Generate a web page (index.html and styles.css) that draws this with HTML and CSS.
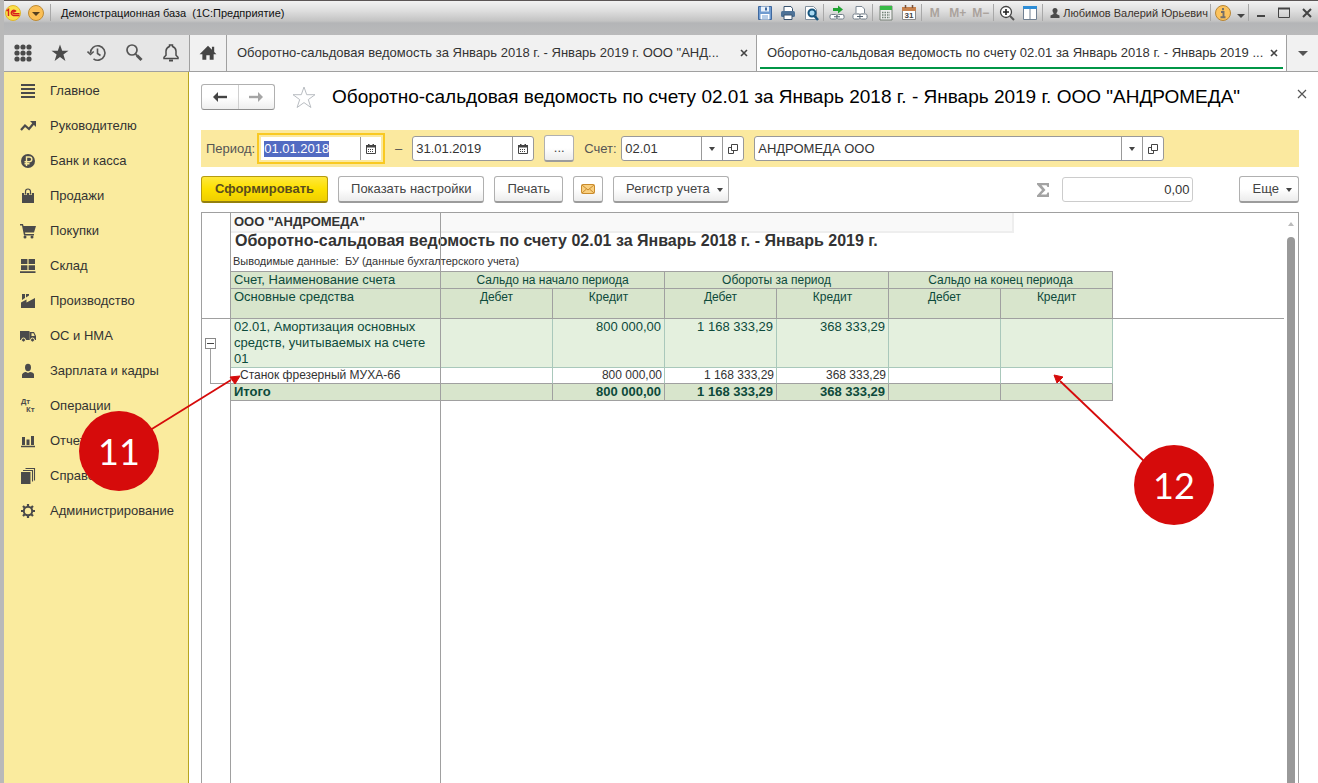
FILE: index.html
```html
<!DOCTYPE html>
<html lang="ru">
<head>
<meta charset="utf-8">
<title>Демонстрационная база (1С:Предприятие)</title>
<link rel="stylesheet" href="styles.css">
</head>
<body>
<div class="window">
  <header class="titlebar">
    <svg class="logo" viewBox="0 0 16 16" aria-label="1С"><circle cx="8" cy="8" r="7.5" fill="#fbe04a" stroke="#e0b52c"/><path d="M1.500 6 3.500 4.500V11M11 6.500A2.600 2.600 0 1 0 8.500 10.500H14.500M9.800 7.300a1 1 0 1 0-1.200 1.300H14.500" fill="none" stroke="#d8201c" stroke-width="1.400"/></svg>
    <button class="tb-menu" aria-label="Главное меню"><svg viewBox="0 0 16 16"><circle cx="8" cy="8" r="7.500" fill="#fbbf55" stroke="#bd8b35"/><path d="M4 7h8l-4 4z" fill="#55401f"/></svg></button>
    <span class="sep"></span>
    <span class="tb-title">Демонстрационная база&nbsp; (1С:Предприятие)</span>
    <div class="tb-tools">
      <button aria-label="Сохранить"><svg viewBox="0 0 16 16"><path d="M1.500 1.500h13v13h-13z" fill="#6f9bd0" stroke="#3f689e"/><path d="M4 1.500h8v5H4z" fill="#e9f1fa"/><path d="M8 2.500h2v3H8z" fill="#3f689e"/><path d="M3.500 9h9v5.500h-9z" fill="#fff"/><path d="M5 11h6M5 13h6" stroke="#6f9bd0"/></svg></button>
      <button aria-label="Печать"><svg viewBox="0 0 16 16"><path d="M4 1.500h7l1.500 2V7H4z" fill="#fff" stroke="#38536f"/><rect x="1" y="6" width="14" height="6" rx="1.500" fill="#4d7297"/><path d="M4 10h8v4.500H4z" fill="#fff" stroke="#38536f"/></svg></button>
      <button aria-label="Просмотр"><svg viewBox="0 0 16 16"><path d="M2.500 1.500h8l3 3v10h-11z" fill="#fff" stroke="#82909e"/><circle cx="9" cy="8" r="3.500" fill="#a9daf3" stroke="#15547c" stroke-width="2"/><path d="m11.500 11 3.500 4" stroke="#15547c" stroke-width="2.500"/></svg></button>
      <span class="sep"></span>
      <button aria-label="Получить ссылку"><svg viewBox="0 0 16 16"><path d="M4 3h5V0.500l5 4-5 4V6H4z" fill="#20a332"/><rect x="1" y="9.500" width="7" height="4.500" rx="1.500" fill="#fff" stroke="#727e89"/><rect x="8" y="9.500" width="7" height="4.500" rx="1.500" fill="#fff" stroke="#727e89"/><path d="M5 11.750h6" stroke="#526271"/></svg></button>
      <button aria-label="Перейти по ссылке"><svg viewBox="0 0 16 16"><path d="M4 8V1.500h6L12.500 4v4" fill="#fff" stroke="#7b8794"/><rect x="1" y="9" width="7" height="5" rx="1.500" fill="#fff" stroke="#727e89"/><rect x="8" y="9" width="7" height="5" rx="1.500" fill="#fff" stroke="#727e89"/><path d="M5 11.500h6" stroke="#526271"/></svg></button>
      <span class="sep"></span>
      <button aria-label="Калькулятор"><svg viewBox="0 0 16 16"><path d="M2 1h12v14H2z" fill="#eee" stroke="#778077"/><path d="M2 1h12v4H2z" fill="#38ba46"/><path d="M4 7.500h8M4 10h8M4 12.500h8" stroke="#718276" stroke-width="1.500" stroke-dasharray="1.500 1"/></svg></button>
      <button aria-label="Календарь"><svg viewBox="0 0 16 16"><path d="M1.500 2.500h13v12h-13z" fill="#fff" stroke="#8b8b8b"/><path d="M1 2h14v4H1z" fill="#c8814b"/><path d="M4.500 0v3M11.500 0v3" stroke="#76513b" stroke-width="1.500"/><text x="8" y="13" text-anchor="middle" class="cal-num">31</text></svg></button>
      <span class="sep"></span>
      <button class="mem">M</button><button class="mem">M+</button><button class="mem">M−</button>
      <span class="sep"></span>
      <button aria-label="Масштаб"><svg viewBox="0 0 16 16"><circle cx="7" cy="7" r="5.500" fill="#fff" stroke="#444" stroke-width="1.300"/><path d="M4 7h6M7 4v6" stroke="#222" stroke-width="1.600"/><path d="m11 11 4 4" stroke="#555" stroke-width="2"/></svg></button>
      <button aria-label="Окна"><svg viewBox="0 0 16 16"><path d="M1.500 2.500h13v12h-13z" fill="#fff" stroke="#708092"/><path d="M1 1h14v3H1z" fill="#2d8dd6"/><path d="M8 4v10" stroke="#708092"/></svg></button>
      <span class="sep"></span>
      <button class="user"><svg viewBox="0 0 10 12"><circle cx="5" cy="3.500" r="2.500" fill="#4a4a4a"/><path d="M3.500 5h3v2l3 1.500V11h-9V8.500l3-1.500z" fill="#4a4a4a"/></svg>Любимов Валерий Юрьевич</button>
      <span class="sep"></span>
      <button aria-label="Информация"><svg viewBox="0 0 16 16"><circle cx="8" cy="8" r="7.500" fill="#fcc35d" stroke="#b78636"/><path d="M8 3v2.300M6 7h2.500v5M5.500 12.200h5" stroke="#74706a" stroke-width="1.900" fill="none"/></svg></button>
      <button class="narrow" aria-label="Ещё"><svg viewBox="0 0 10 16"><path d="M1 9h8l-4 4z" fill="#444"/></svg></button>
      <span class="sep"></span>
      <button aria-label="Свернуть"><svg viewBox="0 0 16 16"><path d="M4 11h8" stroke="#444" stroke-width="2"/></svg></button>
      <button aria-label="Развернуть"><svg viewBox="0 0 16 16"><path d="M2.500 3.500h11v9h-11z" fill="none" stroke="#444"/><path d="M2 3.500h12" stroke="#444" stroke-width="2"/></svg></button>
      <button aria-label="Закрыть"><svg viewBox="0 0 16 16"><path d="m4 4 8 8M12 4l-8 8" stroke="#444" stroke-width="2"/></svg></button>
    </div>
  </header>

  <div class="tabs-row">
    <div class="quick">
      <button aria-label="Меню функций"><svg viewBox="0 0 20 20" fill="#4a4a4a"><circle cx="4" cy="4" r="2.600"/><circle cx="10" cy="4" r="2.600"/><circle cx="16" cy="4" r="2.600"/><circle cx="4" cy="10" r="2.600"/><circle cx="10" cy="10" r="2.600"/><circle cx="16" cy="10" r="2.600"/><circle cx="4" cy="16" r="2.600"/><circle cx="10" cy="16" r="2.600"/><circle cx="16" cy="16" r="2.600"/></svg></button>
      <button aria-label="Избранное"><svg viewBox="0 0 20 20"><path d="m10 1.500 2.200 6.200h6.300l-5.100 3.900 2 6.400-5.400-3.900L4.600 18l2-6.400L1.500 7.700h6.300z" fill="#4a4a4a"/></svg></button>
      <button aria-label="История"><svg viewBox="0 0 20 20" fill="none" stroke="#555"><path d="M3.500 10a7.200 7.200 0 1 1 3 5.800" stroke-width="1.600"/><path d="M0.500 8.500 3.500 11.500l3.200-3M10.500 5.500v5l3 2" stroke-width="1.600"/></svg></button>
      <button aria-label="Поиск"><svg viewBox="0 0 20 20" fill="none" stroke="#555"><circle cx="8" cy="7" r="5" stroke-width="1.700"/><path d="m11.500 11 2 1.800" stroke-width="1.700"/><path d="m13 12.500 4.500 4.500" stroke-width="3"/></svg></button>
      <button aria-label="Оповещения"><svg viewBox="0 0 20 20"><path d="M3 15.500v-1.200l2-2V8a5 5 0 0 1 3.500-4.500V2h3v1.500A5 5 0 0 1 15 8v4.300l2 2v1.200z" fill="none" stroke="#4a4a4a" stroke-width="1.500"/><path d="M8 16.500h4v2H8z" fill="#4a4a4a"/></svg></button>
    </div>
    <button class="home" aria-label="Начальная страница"><svg viewBox="0 0 16 16"><path d="M8 1.500 0.500 9H3v5h3.500V10h3v4H13V9h2.500l-2-2V2.500h-2V5z" fill="#444"/></svg></button>
    <div class="tab"><span class="tab-text">Оборотно-сальдовая ведомость за Январь 2018 г. - Январь 2019 г. ООО "АНД...</span><button class="tab-close" aria-label="Закрыть вкладку"><svg viewBox="0 0 8 8"><path d="m1 1 6 6M7 1 1 7" stroke="#444" stroke-width="1.600"/></svg></button></div>
    <div class="tab active"><span class="tab-text">Оборотно-сальдовая ведомость по счету 02.01 за Январь 2018 г. - Январь 2019 ...</span><button class="tab-close" aria-label="Закрыть вкладку"><svg viewBox="0 0 8 8"><path d="m1 1 6 6M7 1 1 7" stroke="#444" stroke-width="1.600"/></svg></button></div>
    <button class="tab-more" aria-label="Список вкладок"><i class="caret big"></i></button>
  </div>

  <div class="body">
    <nav class="sidebar">
      <a href="#"><svg viewBox="0 0 16 16"><path d="M1 2h14M1 6h14M1 10h14M1 14h14" stroke="#4a4a4a" stroke-width="2"/></svg>Главное</a>
      <a href="#"><svg viewBox="0 0 16 16"><path d="m1 12 4-4.500 4 3.500 4.500-5.500" fill="none" stroke="#4a4a4a" stroke-width="2.200"/><path d="M10 3h6v6z" fill="#4a4a4a"/></svg>Руководителю</a>
      <a href="#"><svg viewBox="0 0 16 16"><circle cx="8" cy="8" r="7" fill="#4a4a4a"/><path d="M6.500 13V4h3a2.300 2.300 0 0 1 0 4.700H4.500M4.500 10.800h5" fill="none" stroke="#faeb9e" stroke-width="1.400"/></svg>Банк и касса</a>
      <a href="#"><svg viewBox="0 0 16 16"><path d="M2 5h12v10H2z" fill="#4a4a4a"/><path d="M5.500 7V3.500a2.500 2.500 0 0 1 5 0V7" fill="none" stroke="#faeb9e" stroke-width="2.600"/><path d="M5.500 6.500V3.500a2.500 2.500 0 0 1 5 0V6.500" fill="none" stroke="#4a4a4a" stroke-width="1.200"/></svg>Продажи</a>
      <a href="#"><svg viewBox="0 0 16 16"><path d="M0 1h3l.5 2H16l-2 6.500H5l.3 1.500H14v1.500H4L2 2.500H0z" fill="#4a4a4a"/><circle cx="5" cy="14" r="1.500" fill="#4a4a4a"/><circle cx="12" cy="14" r="1.500" fill="#4a4a4a"/></svg>Покупки</a>
      <a href="#"><svg viewBox="0 0 16 16"><path d="M1 1h6.400v5H1zM8.600 1H15v5H8.600zM1 7.200h6.400V12H1zM8.600 7.200H15V12H8.600zM0 13.200h15.500V15H0z" fill="#4a4a4a"/></svg>Склад</a>
      <a href="#"><svg viewBox="0 0 16 16"><path d="M1 15V9.500L6.500 6.500v3L15 5v10zM2 1h3v4l-3 2zM6 1h3v1.500L6 4.500z" fill="#4a4a4a"/></svg>Производство</a>
      <a href="#"><svg viewBox="0 0 16 16"><path d="M0 3h9.500v9H0z" fill="#4a4a4a"/><path d="M9.500 4H14l2 4v4H9.500z" fill="#4a4a4a"/><path d="M11.500 5.300h2L14.700 8h-3.200z" fill="#faeb9e"/><circle cx="3.500" cy="12" r="2" fill="#4a4a4a" stroke="#faeb9e"/><circle cx="12.500" cy="12" r="2" fill="#4a4a4a" stroke="#faeb9e"/></svg>ОС и НМА</a>
      <a href="#"><svg viewBox="0 0 16 16"><ellipse cx="8" cy="4.500" rx="3" ry="3.700" fill="#4a4a4a"/><path d="M2 15v-3.500c1-2 3-2.500 4-2.500l2 1 2-1c2 0 4 1 4 2.500V15z" fill="#4a4a4a"/></svg>Зарплата и кадры</a>
      <a href="#"><svg viewBox="0 0 16 16" class="dtkt"><text x="1" y="6">Дт</text><text x="6" y="14">Кт</text></svg>Операции</a>
      <a href="#"><svg viewBox="0 0 16 16"><path d="M1 12.800h14v1.500H1zM2 4h3v8H2zM6.500 6.500h3V12h-3zM11 3h3v9h-3z" fill="#4a4a4a"/></svg>Отчеты</a>
      <a href="#"><svg viewBox="0 0 16 16"><path d="M1 4h9.500v12H1z" fill="#4a4a4a"/><path d="M3 2.500h9.500v11M5.500.500H14.500v12" fill="none" stroke="#4a4a4a" stroke-width="1.100"/></svg>Справочники</a>
      <a href="#"><svg viewBox="0 0 16 16"><circle cx="8" cy="8" r="4.200" fill="none" stroke="#4a4a4a" stroke-width="2"/><path d="M8 1v2.500M8 12.500V15M1 8h2.500M12.500 8H15M3 3l2 2M11 11l2 2M13 3l-2 2M5 11l-2 2" stroke="#4a4a4a" stroke-width="2.200"/></svg>Администрирование</a>
    </nav>

    <main class="content">
      <div class="page-head">
        <div class="nav-pair">
          <button aria-label="Назад"><svg viewBox="0 0 16 12"><path d="M6 1v10L1 6z" fill="#444"/><path d="M4 6h11" stroke="#444" stroke-width="2.400"/></svg></button>
          <button aria-label="Вперед"><svg viewBox="0 0 16 12"><path d="M10 1v10l5-5z" fill="#a5a5a5"/><path d="M1 6h11" stroke="#a5a5a5" stroke-width="2.400"/></svg></button>
        </div>
        <button class="fav" aria-label="В избранное"><svg viewBox="0 0 24 24"><path d="m12 2 2.700 7.700H23l-6.700 4.900 2.600 7.900-6.900-4.900-6.900 4.900 2.600-7.900L1 9.700h8.300z" fill="none" stroke="#b9bdc2"/></svg></button>
        <h1>Оборотно-сальдовая ведомость по счету 02.01 за Январь 2018 г. - Январь 2019 г. ООО "АНДРОМЕДА"</h1>
        <button class="page-close" aria-label="Закрыть"><svg viewBox="0 0 10 10"><path d="m1 1 8 8M9 1 1 9" stroke="#555" stroke-width="1.200"/></svg></button>
      </div>

      <div class="filter">
        <label for="from">Период:</label>
        <div class="field focus"><input id="from" class="date" value="01.01.2018"><button aria-label="Выбрать дату"><svg viewBox="0 0 10 10"><path d="M.500 1.500h9v8h-9z" fill="#fff" stroke="#444"/><path d="M0 1h10v2.500H0zM2 0h1.500v2H2zM6.500 0H8v2H6.500z" fill="#444"/><path d="M2 5.500h6M2 7.500h6" stroke="#444" stroke-dasharray="1 1"/></svg></button></div>
        <span class="dash">–</span>
        <div class="field"><input class="date" aria-label="Конец периода" value="31.01.2019"><button aria-label="Выбрать дату"><svg viewBox="0 0 10 10"><path d="M.500 1.500h9v8h-9z" fill="#fff" stroke="#444"/><path d="M0 1h10v2.500H0zM2 0h1.500v2H2zM6.500 0H8v2H6.500z" fill="#444"/><path d="M2 5.500h6M2 7.500h6" stroke="#444" stroke-dasharray="1 1"/></svg></button></div>
        <button class="btn dots" aria-label="Выбрать период">...</button>
        <label for="acc">Счет:</label>
        <div class="field"><input id="acc" class="acc" value="02.01"><button aria-label="Список"><i class="caret"></i></button><button aria-label="Открыть"><svg viewBox="0 0 10 10"><path d="M3.500.500h6v6h-6zM3 3.500H.500v6h5V7" fill="none" stroke="#444"/></svg></button></div>
        <div class="field org"><input aria-label="Организация" value="АНДРОМЕДА ООО"><button aria-label="Список"><i class="caret"></i></button><button aria-label="Открыть"><svg viewBox="0 0 10 10"><path d="M3.500.500h6v6h-6zM3 3.500H.500v6h5V7" fill="none" stroke="#444"/></svg></button></div>
      </div>

      <div class="actions">
        <button class="btn primary">Сформировать</button>
        <button class="btn">Показать настройки</button>
        <button class="btn">Печать</button>
        <button class="btn mail" aria-label="Отправить по почте"><svg viewBox="0 0 14 10"><rect x=".5" y=".5" width="13" height="9" rx="1" fill="#f9cf7f" stroke="#c98b2c"/><path d="m1 1 6 5 6-5M1 9l4.500-4M13 9 8.500 5" fill="none" stroke="#c98b2c"/></svg></button>
        <button class="btn">Регистр учета<i class="caret"></i></button>
        <svg class="sigma" viewBox="0 0 12 14" aria-label="Сумма"><path d="M0 0h12v4h-1.500L9.500 2.300H4.500L8.500 7l-4.500 4.500h5.500l1-2H12V14H0v-1.500L5 7 0 1.500z" fill="#a3a3a3"/></svg>
        <input class="sum" aria-label="Сумма" value="0,00" readonly>
        <button class="btn more">Еще<i class="caret"></i></button>
      </div>

      <div class="report">
        <div class="gutter"><button class="collapse" aria-label="Свернуть группу"></button><i class="bracket"></i></div>
        <div class="sheet">
          <div class="org-line">ООО "АНДРОМЕДА"</div>
          <h2>Оборотно-сальдовая ведомость по счету 02.01 за Январь 2018 г. - Январь 2019 г.</h2>
          <p>Выводимые данные:&nbsp; БУ (данные бухгалтерского учета)</p>
          <table>
            <colgroup><col class="c-name"><col span="6" class="c-num"></colgroup>
            <thead>
              <tr class="h1"><th>Счет, Наименование счета</th><th colspan="2">Сальдо на начало периода</th><th colspan="2">Обороты за период</th><th colspan="2">Сальдо на конец периода</th></tr>
              <tr class="h2"><th>Основные средства</th><th>Дебет</th><th>Кредит</th><th>Дебет</th><th>Кредит</th><th>Дебет</th><th>Кредит</th></tr>
            </thead>
            <tbody>
              <tr class="group"><td>02.01, Амортизация основных средств, учитываемых на счете 01</td><td></td><td>800 000,00</td><td>1 168 333,29</td><td>368 333,29</td><td></td><td></td></tr>
              <tr class="item"><td>Станок фрезерный МУХА-66</td><td></td><td>800 000,00</td><td>1 168 333,29</td><td>368 333,29</td><td></td><td></td></tr>
              <tr class="total"><td>Итого</td><td></td><td>800 000,00</td><td>1 168 333,29</td><td>368 333,29</td><td></td><td></td></tr>
            </tbody>
          </table>
          <i class="freeze-v"></i>
        </div>
        <i class="freeze-h"></i>
        <div class="scroll"><i class="up"></i><i class="thumb"></i></div>
      </div>
    </main>
  </div>

  <svg class="callout c11" viewBox="0 0 164 122"><path d="M76 62 160 10" stroke="#d60b0b" stroke-width="1.800"/><path d="m169 6-5 8-5-7z" fill="#d60b0b" stroke="#d60b0b"/><circle cx="48" cy="81" r="40" fill="#d60b0b"/><text x="48" y="95" text-anchor="middle">11</text></svg>
  <svg class="callout c12" viewBox="0 0 164 154"><path d="M98 90 12 8" stroke="#d60b0b" stroke-width="1.800"/><path d="m6 2 9 2-6 6z" fill="#d60b0b" stroke="#d60b0b"/><circle cx="126" cy="112" r="40" fill="#d60b0b"/><text x="126" y="126" text-anchor="middle">12</text></svg>
</div>
<script src="app.js"></script>
</body>
</html>
```
FILE: styles.css
```css
* { box-sizing: border-box; }
body { margin: 0; font: 13px/16px "Liberation Sans", Arial, sans-serif; color: #333; }
button, input { font: inherit; color: inherit; margin: 0; }
button { padding: 0; border: 0; background: none; }
svg { display: block; }
h1, h2, p { margin: 0; }

.window { position: relative; display: flex; flex-direction: column; height: 100vh; min-height: 540px; overflow: hidden; border-left: 4px solid #b9b9b9; background: #fff; }

/* Title bar */
.titlebar { display: flex; align-items: flex-start; flex: none; height: 35px; padding-top: 3px; border-top: 1px solid #5b5555; background: linear-gradient(#f2f2f2 0, #dedede 10px, #c3c3c3 20px, #b4b5b7 22px, #bababb 34px); font-size: 11px; line-height: 18px; color: #111; }
.logo { flex: none; width: 16px; height: 16px; margin: 1px 7px 0 1px; }
.tb-menu svg { width: 16px; height: 16px; margin-top: 1px; }
.titlebar .sep { flex: none; width: 1px; height: 17px; background: #a8a8a8; }
.titlebar > .sep { margin-left: 6px; }
.tb-title { margin-left: 10px; white-space: nowrap; }
.tb-tools { display: flex; margin-left: auto; white-space: nowrap; }
.tb-tools .sep { margin: 0 1px; }
.tb-tools .user ~ .sep { margin: 0; }
.tb-tools button { display: flex; align-items: center; justify-content: center; width: 23px; height: 18px; }
.tb-tools button svg { flex: none; width: 16px; height: 16px; }
.tb-tools .narrow { width: 14px; }
.tb-tools .narrow svg { width: 10px; }
.tb-tools .mem { font-size: 12px; font-weight: bold; color: #aba39d; }
.tb-tools .user { width: auto; padding: 0 2px 0 6px; gap: 3px; color: #3b332c; }
.tb-tools .user svg { width: 10px; height: 12px; }
.cal-num { font: bold 8px "Liberation Sans", sans-serif; fill: #444; }

/* Tabs */
.tabs-row { display: flex; flex: none; height: 37px; border-bottom: 1px solid #a0a0a0; background: #f1f1f1; }
.quick { display: flex; flex: none; align-items: center; width: 185px; background: #e6e6e6; }
.quick button { display: flex; justify-content: center; width: 37px; }
.quick svg { width: 20px; height: 20px; }
.home { display: flex; flex: none; align-items: center; justify-content: center; width: 38px; border-left: 1px solid #a0a0a0; border-right: 1px solid #a0a0a0; }
.home svg { width: 18px; height: 18px; }
.tab { display: flex; flex: 1 1 0; align-items: center; min-width: 0; padding: 0 6px 0 10px; }
.tab.active { position: relative; background: #fff; border-left: 1px solid #a0a0a0; }
.tab.active::after { content: ""; position: absolute; left: 3px; right: 3px; bottom: 2px; height: 2px; background: #009646; }
.tab-text { flex: 1; overflow: hidden; white-space: nowrap; }
.tab-close { flex: none; padding: 2px; }
.tab-close svg { width: 8px; height: 8px; }
.tab-more { display: flex; flex: none; align-items: center; justify-content: center; width: 32px; border-left: 1px solid #a0a0a0; }
.caret { display: inline-block; border: 3px solid transparent; border-top: 4px solid #444; border-bottom: 0; }
.caret.big { border-width: 5px 5px 0; border-top-color: #555; }

/* Sidebar */
.body { display: flex; flex: 1; min-height: 0; }
.sidebar { flex: none; width: 185px; padding-top: 1px; background: #faeb9e; border-right: 1px solid #b7a51f; }
.sidebar a { display: flex; align-items: center; gap: 14px; height: 35px; padding-left: 16px; color: #333; text-decoration: none; white-space: nowrap; }
.sidebar svg { width: 16px; height: 16px; }
.dtkt { overflow: visible; font: bold 7px "Open Sans", sans-serif; fill: #4a4a4a; }

/* Page */
.content { display: flex; flex-direction: column; flex: 1; min-width: 0; padding: 12px 19px 0 12px; }
.page-head { display: flex; flex: none; align-items: center; height: 26px; margin-right: -8px; }
.nav-pair { display: flex; flex: none; width: 74px; height: 26px; border: 1px solid #b0b0b0; border-bottom-color: #8e8e8e; border-radius: 3px; background: linear-gradient(#fff 50%, #eee); }
.nav-pair button { display: flex; flex: 1; align-items: center; justify-content: center; }
.nav-pair button + button { border-left: 1px solid #d0d0d0; }
.nav-pair svg { width: 16px; height: 12px; }
.fav { margin-left: 17px; }
.fav svg { width: 24px; height: 24px; }
h1 { flex: 1; margin-left: 16px; font-size: 19px; line-height: 26px; font-weight: normal; color: #000; white-space: nowrap; }
.page-close svg { width: 10px; height: 10px; margin-bottom: 6px; }

.filter { display: flex; flex: none; align-items: center; height: 37px; margin-top: 20px; padding-left: 5px; background: #fbe99f; color: #555; white-space: nowrap; }
.field { display: flex; height: 25px; border: 1px solid #999; border-radius: 3px; background: #fff; color: #333; overflow: hidden; }
.field input { min-width: 0; border: 0; padding: 0 3px; background: none; outline: none; }
.field input::selection { background: #526bc2; color: #fff; }
.field button { display: flex; flex: none; align-items: center; justify-content: center; width: 21px; border-left: 1px solid #999; }
.field svg { width: 10px; height: 10px; }
.field .date { width: 99px; }
.field .acc { width: 79px; }
.field.focus { height: 31px; margin-left: 2px; padding: 2px; border: 2px solid #f9c922; border-radius: 0; background: linear-gradient(#fff, #fff) content-box, #fbe99f; }
.dash { width: 27px; text-align: center; }
.dots { width: 30px; margin: 0 10px; }
.filter label[for="acc"] { width: 37px; }
.org { flex: 0 1 410px; margin-left: 10px; }
.org input { flex: 1; }

.actions { display: flex; flex: none; align-items: center; gap: 10px; margin-top: 9px; }
.btn { height: 27px; padding: 0 12px; border: 1px solid #b0b0b0; border-bottom: 2px solid #9c9c9c; border-radius: 3px; background: linear-gradient(#fff 50%, #ececec); color: #444; white-space: nowrap; }
.btn .caret { margin: 0 -7px 0 7px; vertical-align: 1px; }
.btn.dots { padding: 0; }
.btn.primary { padding: 0 13px; background: linear-gradient(#ffe83b, #fde000 50%, #efce00); border-color: #b59b10; border-bottom-color: #94800e; font-weight: bold; color: #5a4d1e; }
.btn.more { padding: 0 13px; }
.btn.mail { display: flex; align-items: center; justify-content: center; width: 30px; padding: 0; }
.mail svg { width: 14px; height: 10px; }
.sigma { width: 12px; height: 14px; margin-left: auto; }
.sum { width: 131px; height: 25px; margin: 0 36px 0 3px; padding: 0 2px; border: 1px solid #ccc; border-radius: 3px; text-align: right; }

/* Report */
.report { position: relative; display: flex; flex: 1; min-height: 0; margin-top: 9px; border: 1px solid #a0a0a0; border-bottom: 0; overflow: hidden; }
.gutter { position: relative; flex: none; width: 28px; }
.collapse { position: absolute; left: 3px; top: 125px; width: 11px; height: 11px; border: 1px solid #888; background: linear-gradient(#444, #444) center / 7px 1px no-repeat; }
.bracket { position: absolute; left: 8px; top: 136px; width: 20px; height: 35px; border-left: 1px solid #a0a0a0; border-bottom: 1px solid #a0a0a0; }
.sheet { position: relative; flex: 1; min-width: 0; border-left: 1px solid #a0a0a0; }
.org-line { width: 783px; height: 20px; padding: 0 3px; border-right: 2px solid #eee; border-bottom: 2px solid #eee; background: #f9f9f9; line-height: 18px; font-weight: bold; }
h2 { padding: 0 4px; font-size: 16px; line-height: 16px; white-space: nowrap; }
.sheet p { padding: 4px 2px; height: 22px; font-size: 11px; line-height: 16px; white-space: nowrap; }
table { width: 882px; table-layout: fixed; border-collapse: separate; border-spacing: 0; border-top: 1px solid #a0a0a0; color: #0d4a3b; }
.c-name { width: 210px; }
.c-num { width: 112px; }
th, td { padding: 0 3px; border-right: 1px solid #a0a0a0; border-bottom: 1px solid #a0a0a0; font-weight: normal; vertical-align: top; line-height: 16px; }
td { text-align: right; }
th:first-child, td:first-child { text-align: left; }
th, .total td { background: #d8e5cc; }
th:not(:first-child) { font-size: 12px; }
.h2 th { height: 30px; }
.group td { background: #e4f0de; border-color: #a9c8bb; }
.item td { padding: 0 2px; color: #333; font-size: 12px; line-height: 15px; border-right-color: #a9c8bb; }
.item td:first-child { padding-left: 9px; }
.total td { font-weight: bold; }
.freeze-v { position: absolute; left: 209px; top: 0; bottom: 0; width: 1px; background: #a0a0a0; }
.freeze-h { position: absolute; left: 0; right: 14px; top: 105px; height: 1px; background: #a0a0a0; }
.scroll { display: flex; flex: none; flex-direction: column; align-items: center; width: 14px; padding-top: 9px; }
.up { border: 3px solid transparent; border-top: 0; border-bottom: 4px solid #bbb; }
.thumb { flex: 1; width: 8px; margin-top: 11px; border-radius: 4px 4px 0 0; background: #999; }

/* Numbered callouts drawn over the page */
.callout { position: absolute; width: 164px; overflow: visible; font: 36px Lato, sans-serif; fill: #fff; pointer-events: none; }
.c11 { left: 67px; top: 370px; height: 122px; }
.c12 { left: 1044px; top: 373px; height: 154px; }
```
FILE: app.js
```js
const from = document.getElementById("from");
from.focus();
from.select();
```
